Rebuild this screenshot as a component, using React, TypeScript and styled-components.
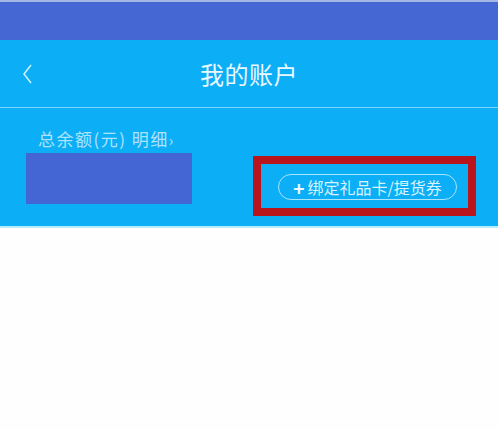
import React from "react";
import styled, { createGlobalStyle } from "styled-components";

const GlobalStyle = createGlobalStyle`
  html, body {
    margin: 0;
    padding: 0;
    background: #fefefe;
    font-family: "Noto Sans CJK SC", "Noto Sans", sans-serif;
  }
`;

const Page = styled.div`
  width: 498px;
  min-height: 430px;
  background: #fefefe;
`;

const StatusBar = styled.div`
  height: 38px;
  background: #4467d4;
  border-top: 2px solid #a3b6e6;
`;

const Header = styled.header`
  background: #0caef6;
  border-bottom: 2px solid #b4eefc;
`;

const NavBar = styled.nav`
  height: 68px;
  display: grid;
  grid-template-columns: 60px 1fr 60px;
  align-items: center;
  border-bottom: 1px solid #7fd4f8;
  box-sizing: border-box;
`;

const BackButton = styled.button`
  background: none;
  border: none;
  padding: 0 0 0 22px;
  height: 100%;
  display: flex;
  align-items: center;
  color: #c9f0ff;
  cursor: pointer;
`;

const Title = styled.h1`
  margin: 0;
  text-align: center;
  font-size: 24px;
  font-weight: 400;
  color: #eaf8ff;
  line-height: 1;
  letter-spacing: 0.5px;
`;

const Balance = styled.section`
  height: 118px;
  box-sizing: border-box;
  padding: 0 22px 0 26px;
  display: flex;
  justify-content: space-between;
  align-items: flex-start;
`;

const BalanceInfo = styled.div`
  display: flex;
  flex-direction: column;
  padding-top: 21px;
`;

const BalanceLabel = styled.div`
  margin-left: 12px;
  font-size: 17px;
  line-height: 20px;
  color: #aee3fb;
  letter-spacing: 1.5px;
`;

const Chevron = styled.span`
  font-size: 15px;
  margin-left: 0;
`;

const AmountMask = styled.div`
  margin-top: 3px;
  width: 166px;
  height: 51px;
  background: #4466d4;
`;

const Highlight = styled.div`
  margin-top: 48px;
  width: 223px;
  height: 60px;
  box-sizing: border-box;
  border: 8px solid #b8161c;
  padding: 10px 11px 8px 17px;
  display: flex;
  align-items: center;
`;

const BindButton = styled.button`
  width: 179px;
  height: 26px;
  box-sizing: border-box;
  border: 1px solid #a8e4fc;
  border-radius: 13px;
  background: transparent;
  color: #d6f3ff;
  font-family: "Noto Sans CJK SC", "Noto Sans", sans-serif;
  font-size: 16px;
  line-height: 1;
  padding: 0;
  display: flex;
  align-items: center;
  justify-content: center;
  gap: 3px;
  cursor: pointer;
`;

const Plus = styled.span`
  font-weight: 700;
  font-size: 19px;
  color: #eefaff;
`;

export default function App() {
  return (
    <Page>
      <GlobalStyle />
      <StatusBar />
      <Header>
        <NavBar>
          <BackButton aria-label="返回">
            <svg width="10" height="20" viewBox="0 0 10 20">
              <path d="M9 1 L2 10 L9 19" fill="none" stroke="currentColor" strokeWidth="1.6" />
            </svg>
          </BackButton>
          <Title>我的账户</Title>
          <span />
        </NavBar>
        <Balance>
          <BalanceInfo>
            <BalanceLabel>
              总余额(元) 明细<Chevron>›</Chevron>
            </BalanceLabel>
            <AmountMask />
          </BalanceInfo>
          <Highlight>
            <BindButton>
              <Plus>+</Plus>绑定礼品卡/提货券
            </BindButton>
          </Highlight>
        </Balance>
      </Header>
    </Page>
  );
}
